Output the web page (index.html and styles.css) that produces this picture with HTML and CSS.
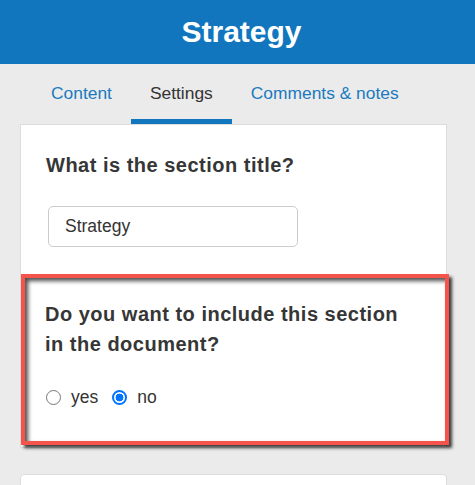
FILE: index.html
```html
<!DOCTYPE html>
<html lang="en">
<head>
<meta charset="utf-8">
<title>Strategy</title>
<link rel="stylesheet" href="styles.css">
</head>
<body>
<header class="topbar">
  <h1 class="title">Strategy</h1>
</header>
<nav class="tabs">
  <a class="tab">Content</a>
  <a class="tab active">Settings</a>
  <a class="tab">Comments &amp; notes</a>
</nav>
<main class="card">
  <section class="section">
    <h2 class="question">What is the section title?</h2>
    <input class="text-input" type="text" value="Strategy">
  </section>
  <section class="section highlighted">
    <h2 class="question">Do you want to include this section in the document?</h2>
    <div class="radios">
      <label class="radio"><input type="radio" name="include"><span>yes</span></label>
      <label class="radio"><input type="radio" name="include" checked><span>no</span></label>
    </div>
  </section>
</main>
<div class="card next"></div>
</body>
</html>
```

FILE: styles.css
```css
* { box-sizing: border-box; }
html, body { margin: 0; padding: 0; }
body {
  background: #ebebeb;
  font-family: "Liberation Sans", Arial, sans-serif;
  color: #333;
  width: 475px;
  height: 485px;
  overflow: hidden;
}
.topbar {
  background: #1176bd;
  height: 64px;
  display: flex;
  align-items: center;
  justify-content: center;
  padding-left: 8px;
}
.title {
  margin: 0;
  color: #fff;
  font-size: 30px;
  font-weight: bold;
  line-height: 1;
}
.tabs {
  display: flex;
  height: 60px;
  padding-left: 32px;
}
.tab {
  display: flex;
  align-items: center;
  height: 60px;
  padding: 3px 19px 0;
  border-bottom: 5px solid transparent;
  font-size: 17.4px;
  color: #1a7abf;
}
.tab.active {
  color: #333;
  border-bottom-color: #1176bd;
}
.card {
  margin-left: 20px;
  width: 427px;
  background: #fff;
  border: 1px solid #ddd;
  padding-bottom: 2px;
}
.section {
  padding: 25px 25px 27px;
}
.question {
  margin: 0;
  font-size: 20px;
  font-weight: bold;
  line-height: 30px;
  letter-spacing: 0.5px;
  color: #363636;
}
.text-input {
  display: block;
  margin: 26px 0 0 2px;
  width: 250px;
  height: 41px;
  border: 1px solid #ccc;
  border-radius: 5px;
  padding: 0 16px;
  font-family: "Liberation Sans", Arial, sans-serif;
  font-size: 17.5px;
  color: #333;
  background: #fff;
}
.highlighted {
  width: 428px;
  border: 4px solid #f4544b;
  padding: 21px 30px 32px 20px;
  box-shadow: 3px 3px 3px rgba(0,0,0,0.75), inset 3px 3px 4px rgba(0,0,0,0.7);
}
.radios {
  display: flex;
  align-items: center;
  gap: 13px;
  margin-top: 26px;
  height: 24px;
  font-size: 17.5px;
}
.radio {
  display: flex;
  align-items: center;
  gap: 10px;
  color: #333;
}
.radio input {
  appearance: none;
  -webkit-appearance: none;
  width: 15px;
  height: 15px;
  margin: 0 0 0 1px;
  border: 1px solid #767676;
  border-radius: 50%;
  background: #fff;
}
.radio input:checked {
  border: 2px solid #0075ff;
  background: radial-gradient(circle, #0075ff 0 3.6px, #fff 4.2px);
}
.next {
  margin-top: 26px;
  height: 40px;
  border-radius: 4px;
  padding: 0;
}
```
